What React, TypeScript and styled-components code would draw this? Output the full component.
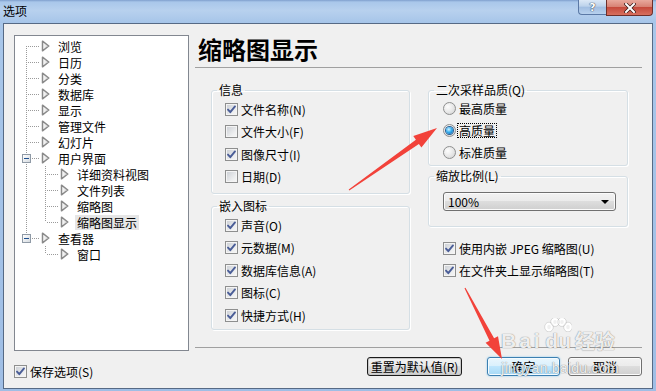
import React from 'react';
import styled, {createGlobalStyle, css} from 'styled-components';

const GlobalStyle = createGlobalStyle`
    html, body {
        margin: 0;
        padding: 0;
    }
    body {
        width: 656px;
        height: 391px;
        overflow: hidden;
        font-family: "Noto Sans CJK SC", "Noto Sans", "Liberation Sans", sans-serif;
        font-size: 12px;
        color: #000;
    }
    * {
        box-sizing: border-box;
    }
`;

const Window = styled.div`
    position: relative;
    width: 656px;
    height: 391px;
    display: flex;
    flex-direction: column;
    background: linear-gradient(to bottom, #a9c7ea, #9fbee5);
    overflow: hidden;
`;

const TitleBar = styled.div`
    flex: none;
    height: 23px;
    display: flex;
    justify-content: space-between;
    align-items: flex-start;
    background: linear-gradient(to bottom, #7f9fcd 0, #a9c7ea 2px, #b8d1ee 45%, #a6c5e9 100%);
`;

const Title = styled.div`
    padding: 4px 0 0 3px;
    line-height: 14px;
`;

const Controls = styled.div`
    display: flex;
    margin-right: 3px;
`;

const CaptionButton = styled.div<{$kind: 'help' | 'close'}>`
    display: flex;
    align-items: center;
    justify-content: center;
    border: 1px solid;
    border-top: none;
    color: #fff;
    font-family: "DejaVu Sans", sans-serif;
    font-weight: bold;
    font-size: 11px;
    text-shadow: 0 0 1px #1d2c44, 0 0 1px #1d2c44;
    ${p => p.$kind === 'close' ? css`
        width: 47px;
        height: 16px;
        border-color: #6e2f2a;
        border-radius: 0 0 4px 0;
        background: linear-gradient(to bottom, #e9a99d 0%, #d88274 45%, #c64a3c 50%, #d7705f 100%);
    ` : css`
        width: 28px;
        height: 15px;
        border-color: #5b79a6;
        border-right: none;
        border-radius: 0 0 0 4px;
        background: linear-gradient(to bottom, #dce8f6 0%, #bcd2eb 45%, #a0bde1 50%, #b8d1ee 100%);
    `}
`;

const Client = styled.div`
    flex: 1;
    margin: 0 3px 2px 3px;
    border: 1px solid #566a85;
    background: #f0f0f0;
    display: flex;
    gap: 6px;
    padding: 11px 10px 0 10px;
`;

const LeftColumn = styled.div`
    flex: none;
    width: 175px;
    display: flex;
    flex-direction: column;
`;

const TreeBox = styled.div`
    height: 316px;
    border: 1px solid #828790;
    background: #fff;
    padding: 2px 0 0 7px;
`;

const TreeRow = styled.div`
    height: 16px;
    display: flex;
    align-items: center;
`;

const dots = (dir: string) => `repeating-linear-gradient(${dir}, #9a9a9a 0 1px, transparent 1px 2px)`;

const Guide = styled.span<{$up?: boolean; $down?: boolean; $branch?: boolean}>`
    position: relative;
    flex: none;
    width: 19px;
    align-self: stretch;

    &::before {
        content: '';
        display: ${p => (p.$up || p.$down) ? 'block' : 'none'};
        position: absolute;
        left: 4px;
        width: 1px;
        top: ${p => p.$up ? '0' : '8px'};
        bottom: ${p => p.$down ? '0' : '8px'};
        background: ${dots('to bottom')};
    }

    &::after {
        content: '';
        display: ${p => p.$branch ? 'block' : 'none'};
        position: absolute;
        left: 6px;
        width: 12px;
        top: 8px;
        height: 1px;
        background: ${dots('to right')};
    }
`;

const Expander = styled.span`
    position: absolute;
    z-index: 1;
    left: 0;
    top: 4px;
    width: 9px;
    height: 9px;
    border: 1px solid #8f9aa6;
    background: linear-gradient(135deg, #ffffff, #d6dbe0);

    &::after {
        content: '';
        position: absolute;
        left: 1px;
        top: 3px;
        width: 5px;
        height: 1px;
        background: #1f4f8f;
    }
`;

const NodeIcon = styled.svg`
    flex: none;
    margin-right: 6px;
`;

const NodeLabel = styled.span<{$selected?: boolean}>`
    padding: 0 2px;
    line-height: 15px;
    white-space: nowrap;
    background: ${p => p.$selected ? '#e6e6e6' : 'transparent'};
`;

const SaveRow = styled.div`
    margin-top: 9px;
    height: 22px;
    display: flex;
    align-items: center;
`;

const RightColumn = styled.div`
    flex: none;
    width: 447px;
    display: flex;
    flex-direction: column;
`;

const Heading = styled.div`
    height: 28px;
    line-height: 28px;
    padding-left: 3px;
    font-size: 24px;
    font-weight: bold;
`;

const Rule = styled.div<{$mt: number}>`
    flex: none;
    height: 1px;
    margin-top: ${p => p.$mt}px;
    background: #a0a0a0;
`;

const Body = styled.div`
    display: grid;
    grid-template-columns: 199px 200px;
    column-gap: 18px;
    align-items: start;
    padding-left: 16px;
    margin-top: 15px;
`;

const Stack = styled.div`
    display: flex;
    flex-direction: column;
`;

const Group = styled.fieldset<{$mt?: number; $pb: number}>`
    margin: ${p => p.$mt || 0}px 0 0 0;
    padding: 0 0 ${p => p.$pb}px 0;
    min-width: 0;
    border: 1px solid #d5dfe5;
    border-radius: 3px;
    box-shadow: inset 1px 1px 0 #fff, 1px 1px 0 #fff;
`;

const Legend = styled.legend`
    margin-left: 5px;
    padding: 0 2px;
    line-height: 14px;
    font-size: 12px;
`;

const GroupBody = styled.div<{$pl: number; $pt?: number}>`
    padding-left: ${p => p.$pl}px;
    padding-top: ${p => p.$pt || 0}px;
`;

const OptionRow = styled.div<{$h?: number}>`
    height: ${p => p.$h || 22.5}px;
    display: flex;
    align-items: center;
    white-space: nowrap;
`;

const Box = styled.span`
    flex: none;
    width: 13px;
    height: 13px;
    margin-right: 3px;
    border: 1px solid #8e8f8f;
    background: linear-gradient(135deg, #c9cdd3 0%, #eeeff0 70%, #f6f6f6 100%);
    box-shadow: inset 0 0 0 1px #f4f4f4;
    display: flex;
    align-items: center;
    justify-content: center;
`;

const RadioDot = styled.span<{$on?: boolean}>`
    flex: none;
    width: 13px;
    height: 13px;
    margin-right: 2px;
    border-radius: 50%;
    border: 1px solid #8e8f8f;
    background: radial-gradient(circle at 35% 35%, #fdfdfd 0, #e6e6e6 55%, #cdcdcd 100%);
    display: flex;
    align-items: center;
    justify-content: center;

    &::after {
        content: '';
        display: ${p => p.$on ? 'block' : 'none'};
        width: 7px;
        height: 7px;
        border-radius: 50%;
        background: radial-gradient(circle at 40% 35%, #d4f3ff 0, #36aff0 45%, #0b58a2 100%);
        box-shadow: 0 0 0 1px #2b5f93;
    }
`;

const RadioText = styled.span<{$focus?: boolean}>`
    padding: 0 1px;
    line-height: 13px;
    outline: ${p => p.$focus ? '1px dotted #000' : 'none'};
`;

const Select = styled.div`
    height: 19px;
    margin: 9px 11px 0 14px;
    padding: 0 6px 0 4px;
    display: flex;
    align-items: center;
    justify-content: space-between;
    border: 1px solid #707070;
    border-radius: 3px;
    background: linear-gradient(to bottom, #f2f2f2 0%, #ebebeb 49%, #dddddd 50%, #cfcfcf 100%);
    box-shadow: inset 0 0 0 1px #fbfbfb;
`;

const Caret = styled.span`
    width: 0;
    height: 0;
    border-left: 4px solid transparent;
    border-right: 4px solid transparent;
    border-top: 4px solid #000;
`;

const ExtraOptions = styled.div`
    margin-top: 10px;
    padding-left: 15px;
`;

const ButtonRow = styled.div`
    display: flex;
    justify-content: flex-end;
    margin-top: 9px;
`;

const Button = styled.button<{$w: number; $ml?: number; $variant?: 'focus' | 'hot'}>`
    width: ${p => p.$w}px;
    height: 19px;
    margin-left: ${p => p.$ml || 0}px;
    padding: 0;
    font: inherit;
    font-size: 12px;
    line-height: 17px;
    color: #000;
    border-radius: 3px;
    border: 1px solid #707070;
    background: linear-gradient(to bottom, #f2f2f2 0%, #ebebeb 49%, #dddddd 50%, #cfcfcf 100%);
    box-shadow: inset 0 0 0 1px #fbfbfb;
    ${p => p.$variant === 'focus' && css`
        border-color: #1b1b1b;
        box-shadow: inset 0 0 0 1px #c8c8c8;
    `}
    ${p => p.$variant === 'hot' && css`
        border-color: #3c7fb1;
        background: linear-gradient(to bottom, #eaf6fd 0%, #d9f0fc 49%, #bee6fd 50%, #a7d9f5 100%);
        box-shadow: inset 0 0 0 1px #f4fbff, 0 0 2px #7fc4ee;
    `}
`;

const Overlay = styled.svg`
    position: absolute;
    left: 0;
    top: 0;
    pointer-events: none;
`;

const Watermark = styled.div`
    position: absolute;
    left: 501px;
    top: 318px;
    pointer-events: none;
    color: rgba(255, 255, 255, 0.9);
    text-shadow: 0 0 1px rgba(60, 60, 60, 0.55), 0 0 1px rgba(60, 60, 60, 0.35);
    display: flex;
    flex-direction: column;
`;

const Brand = styled.div`
    display: flex;
    align-items: flex-end;
    height: 32px;
    font-family: "Liberation Sans", Arial, sans-serif;
    font-weight: bold;
    font-size: 21px;
    line-height: 18px;
`;

const BrandLatin = styled.span`
    letter-spacing: 3px;
`;

const Paw = styled.span`
    display: flex;
    flex-direction: column;
    align-items: center;
    width: 31px;
`;

const BrandCjk = styled.span`
    font-family: "Noto Sans CJK SC", sans-serif;
    font-size: 20px;
    margin-left: 1px;
`;

const Domain = styled.div`
    margin-top: 10px;
    font-family: "Liberation Sans", Arial, sans-serif;
    font-size: 14px;
    line-height: 16px;
    letter-spacing: 0.3px;
`;

type Node = {label: string; children?: Node[]; selected?: boolean};

const nodes: Node[] = [
    {label: '浏览'},
    {label: '日历'},
    {label: '分类'},
    {label: '数据库'},
    {label: '显示'},
    {label: '管理文件'},
    {label: '幻灯片'},
    {
        label: '用户界面',
        children: [
            {label: '详细资料视图'},
            {label: '文件列表'},
            {label: '缩略图'},
            {label: '缩略图显示', selected: true},
        ],
    },
    {label: '查看器', children: [{label: '窗口'}]},
];

type Row = {node: Node; rails: boolean[]; up: boolean; down: boolean};

function flatten(list: Node[], rails: boolean[] = [], hasParent = false): Row[] {
    return list.flatMap((node, i) => {
        const last = i === list.length - 1;
        const row: Row = {node, rails, up: i > 0 || hasParent, down: !last};
        const kids = node.children ? flatten(node.children, [...rails, !last], true) : [];
        return [row, ...kids];
    });
}

function Triangle() {
    return (
        <NodeIcon width="9" height="12" viewBox="0 0 9 12">
            <defs>
                <linearGradient id="tri" x1="0" y1="0" x2="1" y2="0">
                    <stop offset="0" stopColor="#ffffff" />
                    <stop offset="1" stopColor="#d4d4d4" />
                </linearGradient>
            </defs>
            <path d="M1.5 1.2 L7.8 6 L1.5 10.8 Z" fill="url(#tri)" stroke="#8a8a8a" strokeWidth="1.5" strokeLinejoin="round" />
        </NodeIcon>
    );
}

function Check({on}: {on?: boolean}) {
    return (
        <Box>
            {on && (
                <svg width="11" height="11" viewBox="0 0 11 11">
                    <path d="M2 5.6 L4.3 8.2 L9 2.4" fill="none" stroke="#4a5d97" strokeWidth="1.9" strokeLinecap="round" strokeLinejoin="round" />
                </svg>
            )}
        </Box>
    );
}

function CheckOption({label, on = true}: {label: string; on?: boolean}) {
    return (
        <OptionRow>
            <Check on={on} />
            <span>{label}</span>
        </OptionRow>
    );
}

function RadioOption({label, on, focus}: {label: string; on?: boolean; focus?: boolean}) {
    return (
        <OptionRow $h={22}>
            <RadioDot $on={on} />
            <RadioText $focus={focus}>{label}</RadioText>
        </OptionRow>
    );
}

function arrow(tail: [number, number], tip: [number, number], head = 24, wing = 7) {
    const dx = tip[0] - tail[0];
    const dy = tip[1] - tail[1];
    const len = Math.hypot(dx, dy);
    const ux = dx / len, uy = dy / len;
    const nx = -uy, ny = ux;
    const bx = tip[0] - ux * head, by = tip[1] - uy * head;
    const pt = (x: number, y: number) => `${x.toFixed(1)},${y.toFixed(1)}`;
    return [
        pt(tail[0] + nx * 0.6, tail[1] + ny * 0.6),
        pt(bx + nx * 2.6, by + ny * 2.6),
        pt(bx + nx * wing, by + ny * wing),
        pt(tip[0], tip[1]),
        pt(bx - nx * wing, by - ny * wing),
        pt(bx - nx * 2.6, by - ny * 2.6),
        pt(tail[0] - nx * 0.6, tail[1] - ny * 0.6),
    ].join(' ');
}

export default function App() {
    const rows = flatten(nodes);

    return (
        <>
            <GlobalStyle />
            <Window>
                <TitleBar>
                    <Title>选项</Title>
                    <Controls>
                        <CaptionButton $kind="help">?</CaptionButton>
                        <CaptionButton $kind="close">
                            <svg width="12" height="10" viewBox="0 0 12 10">
                                <path d="M2 1 L10 9 M10 1 L2 9" stroke="#3a1a18" strokeWidth="3.4" strokeLinecap="square" />
                                <path d="M2 1 L10 9 M10 1 L2 9" stroke="#fff" strokeWidth="2" strokeLinecap="square" />
                            </svg>
                        </CaptionButton>
                    </Controls>
                </TitleBar>
                <Client>
                    <LeftColumn>
                        <TreeBox>
                            {rows.map((r, i) => (
                                <TreeRow key={i}>
                                    {r.rails.map((on, k) => <Guide key={k} $up={on} $down={on} />)}
                                    <Guide $up={r.up} $down={r.down} $branch>
                                        {r.node.children && <Expander />}
                                    </Guide>
                                    <Triangle />
                                    <NodeLabel $selected={r.node.selected}>{r.node.label}</NodeLabel>
                                </TreeRow>
                            ))}
                        </TreeBox>
                        <SaveRow>
                            <Check on />
                            <span>保存选项(S)</span>
                        </SaveRow>
                    </LeftColumn>
                    <RightColumn>
                        <Heading>缩略图显示</Heading>
                        <Rule $mt={4} />
                        <Body>
                            <Stack>
                                <Group $pb={5}>
                                    <Legend>信息</Legend>
                                    <GroupBody $pl={13} $pt={1}>
                                        <CheckOption label="文件名称(N)" />
                                        <CheckOption label="文件大小(F)" on={false} />
                                        <CheckOption label="图像尺寸(I)" />
                                        <CheckOption label="日期(D)" on={false} />
                                    </GroupBody>
                                </Group>
                                <Group $mt={5} $pb={2}>
                                    <Legend>嵌入图标</Legend>
                                    <GroupBody $pl={13} $pt={1}>
                                        <CheckOption label="声音(O)" />
                                        <CheckOption label="元数据(M)" />
                                        <CheckOption label="数据库信息(A)" />
                                        <CheckOption label="图标(C)" />
                                        <CheckOption label="快捷方式(H)" />
                                    </GroupBody>
                                </Group>
                            </Stack>
                            <Stack>
                                <Group $pb={2}>
                                    <Legend>二次采样品质(Q)</Legend>
                                    <GroupBody $pl={14}>
                                        <RadioOption label="最高质量" />
                                        <RadioOption label="高质量" on focus />
                                        <RadioOption label="标准质量" />
                                    </GroupBody>
                                </Group>
                                <Group $mt={3} $pb={15}>
                                    <Legend>缩放比例(L)</Legend>
                                    <Select>
                                        <span>100%</span>
                                        <Caret />
                                    </Select>
                                </Group>
                                <ExtraOptions>
                                    <CheckOption label="使用内嵌 JPEG 缩略图(U)" />
                                    <CheckOption label="在文件夹上显示缩略图(T)" />
                                </ExtraOptions>
                            </Stack>
                        </Body>
                        <Rule $mt={17} />
                        <ButtonRow>
                            <Button $w={95} $variant="focus">重置为默认值(R)</Button>
                            <Button $w={73} $ml={25} $variant="hot">确定</Button>
                            <Button $w={74} $ml={8}>取消</Button>
                        </ButtonRow>
                    </RightColumn>
                </Client>
                <Watermark>
                    <Brand>
                        <BrandLatin>Bai</BrandLatin>
                        <Paw>
                            <svg width="28" height="14" viewBox="0 0 28 14">
                                <g fill="none" stroke="rgba(255,255,255,0.95)" strokeWidth="2.5">
                                    <ellipse cx="5" cy="9" rx="3" ry="3.5" />
                                    <ellipse cx="11" cy="4" rx="3" ry="3.2" />
                                    <ellipse cx="18" cy="4" rx="3" ry="3.2" />
                                    <ellipse cx="24" cy="9" rx="3" ry="3.5" />
                                </g>
                                <g fill="none" stroke="rgba(60,60,60,0.25)" strokeWidth="0.6">
                                    <ellipse cx="5" cy="9" rx="4.3" ry="4.8" />
                                    <ellipse cx="11" cy="4" rx="4.3" ry="4.5" />
                                    <ellipse cx="18" cy="4" rx="4.3" ry="4.5" />
                                    <ellipse cx="24" cy="9" rx="4.3" ry="4.8" />
                                </g>
                            </svg>
                            <span>du</span>
                        </Paw>
                        <BrandCjk>经验</BrandCjk>
                    </Brand>
                    <Domain>jingyan.baidu.com</Domain>
                </Watermark>
                <Overlay width="656" height="391" viewBox="0 0 656 391">
                    <polygon points={arrow([349, 190], [437, 128])} fill="#f2423a" />
                    <polygon points={arrow([465, 288], [502, 359], 22, 7)} fill="#f2423a" />
                </Overlay>
            </Window>
        </>
    );
}
